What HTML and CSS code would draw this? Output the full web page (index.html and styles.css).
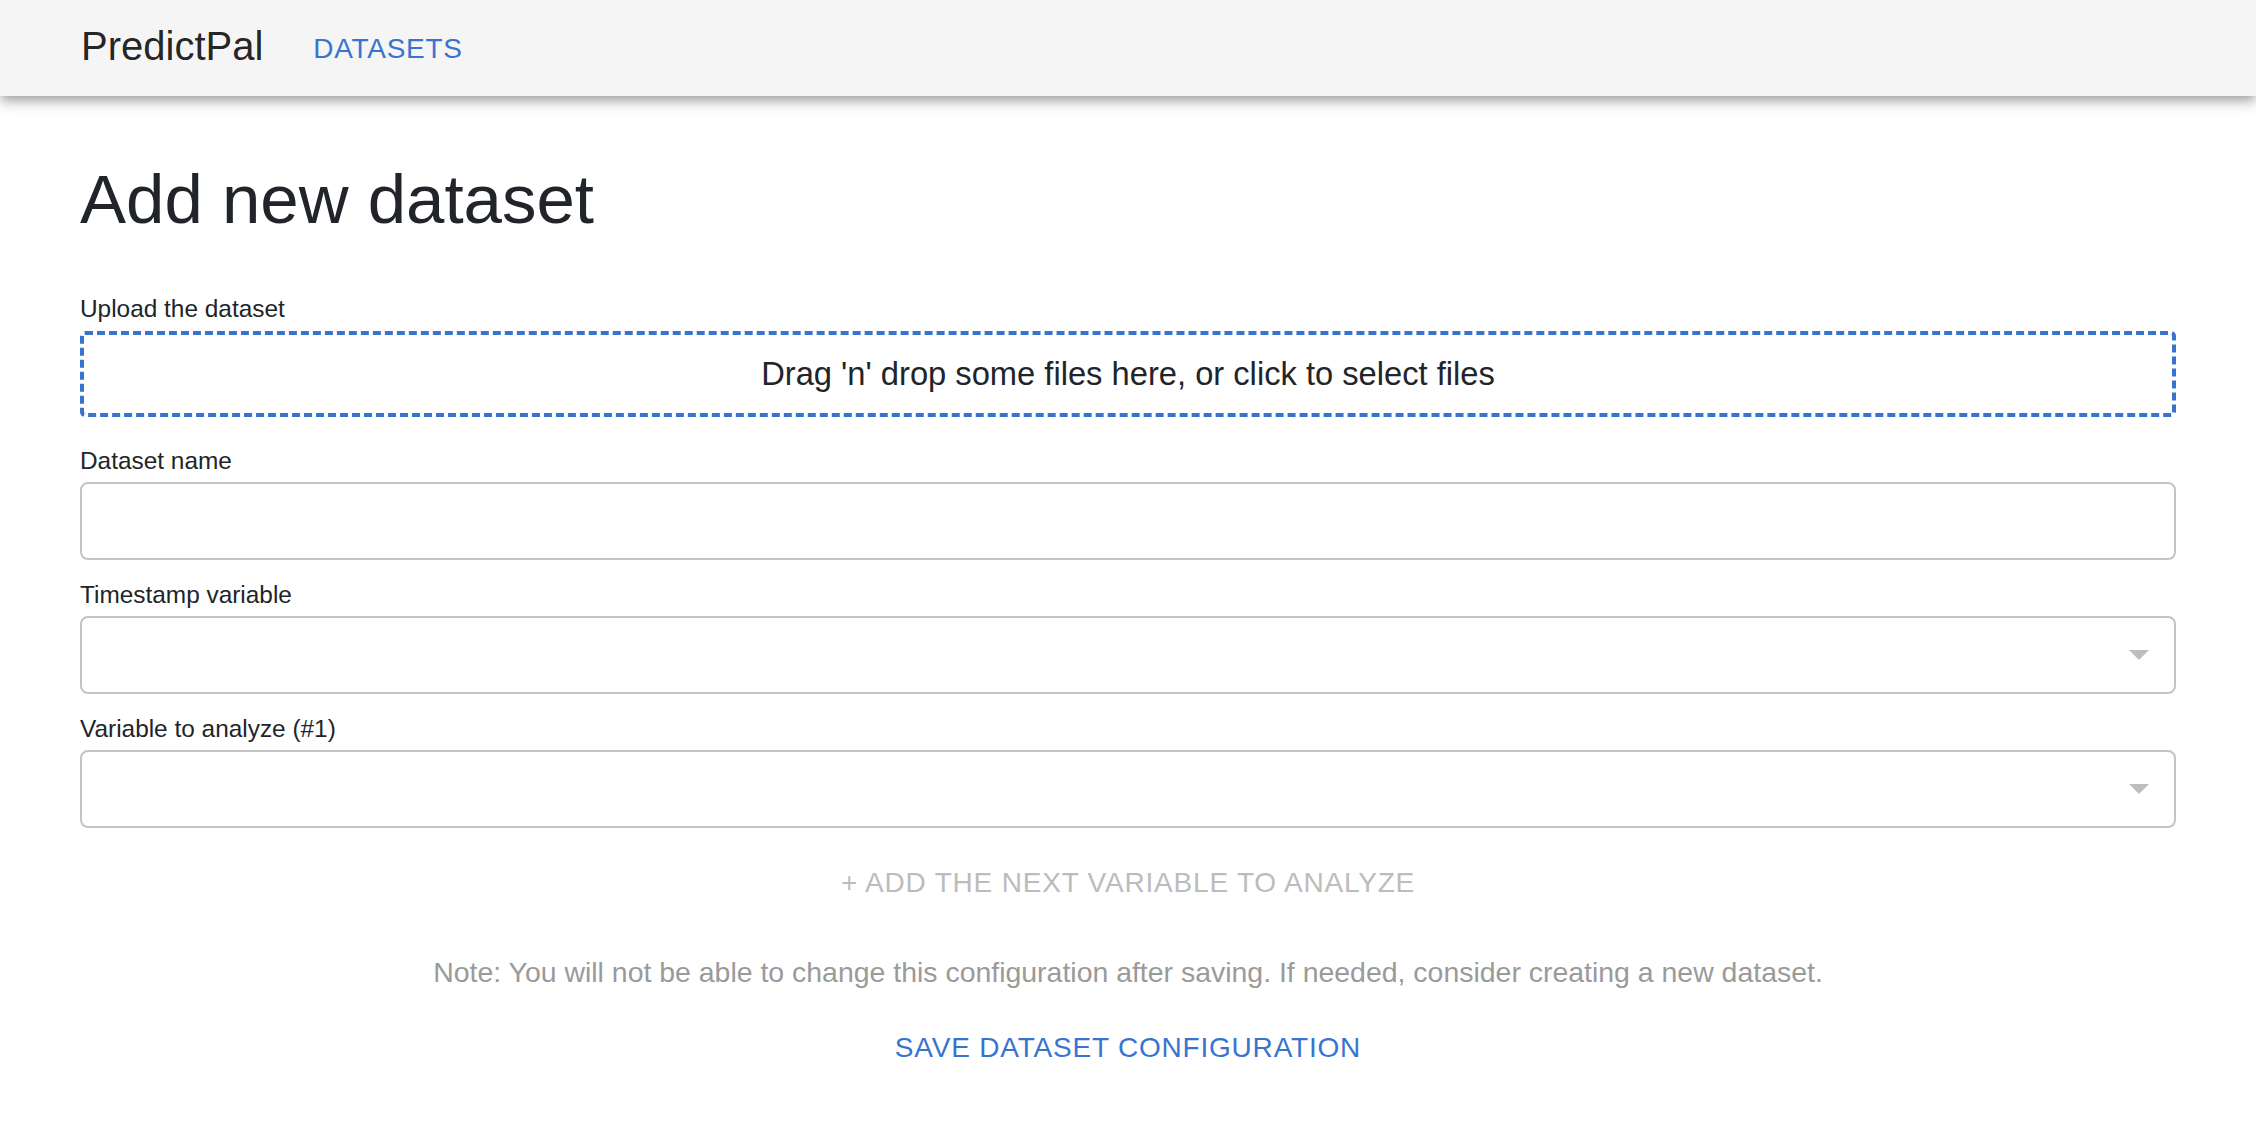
FILE: index.html
```html
<!DOCTYPE html>
<html lang="en">
<head>
<meta charset="utf-8">
<title>PredictPal - Add new dataset</title>
<link rel="stylesheet" href="styles.css">
</head>
<body>
<header class="appbar">
  <div class="toolbar">
    <span class="brand">PredictPal</span>
    <a class="nav-link" href="#">Datasets</a>
  </div>
</header>
<main class="page">
  <h1 class="title">Add new dataset</h1>
  <form class="form">
    <div class="field field-upload">
      <label class="label">Upload the dataset</label>
      <div class="dropzone">Drag 'n' drop some files here, or click to select files</div>
    </div>
    <div class="field">
      <label class="label">Dataset name</label>
      <div class="input"></div>
    </div>
    <div class="field">
      <label class="label">Timestamp variable</label>
      <div class="input select">
        <svg class="arrow" width="20" height="10" viewBox="0 0 20 10"><path d="M0 0 L20 0 L10 10 Z"/></svg>
      </div>
    </div>
    <div class="field">
      <label class="label">Variable to analyze (#1)</label>
      <div class="input select">
        <svg class="arrow" width="20" height="10" viewBox="0 0 20 10"><path d="M0 0 L20 0 L10 10 Z"/></svg>
      </div>
    </div>
  </form>
  <div class="actions">
    <div class="add-btn">+ Add the next variable to analyze</div>
    <p class="note">Note: You will not be able to change this configuration after saving. If needed, consider creating a new dataset.</p>
    <div class="save-btn">Save dataset configuration</div>
  </div>
</main>
</body>
</html>
```
FILE: styles.css
```css
* { box-sizing: border-box; }

body {
  margin: 0;
  font-family: "Liberation Sans", Arial, Helvetica, sans-serif;
  color: #212529;
  background: #ffffff;
}

.appbar {
  position: relative;
  z-index: 1;
  height: 96px;
  background: #f5f5f5;
  box-shadow: 0 4px 8px -2px rgba(0,0,0,0.2), 0 8px 10px 0 rgba(0,0,0,0.14), 0 2px 20px 0 rgba(0,0,0,0.12);
}

.toolbar {
  display: flex;
  align-items: center;
  height: 100%;
  padding-left: 81px;
}

.brand {
  font-size: 40px;
  line-height: 1.6;
  color: rgba(0,0,0,0.87);
  margin-bottom: 4px;
}

.nav-link {
  margin-left: 50px;
  font-size: 28px;
  line-height: 1.75;
  letter-spacing: 0.7px;
  color: #3874cf;
  text-decoration: none;
  text-transform: uppercase;
}

.page {
  padding: 0 80px;
}

.title {
  margin: 63px 0 0;
  font-size: 69px;
  font-weight: 400;
  line-height: 1.2;
  color: #212529;
}

.form {
  display: flex;
  flex-direction: column;
  gap: 17px;
  margin: 49px 0 0;
}

.field-upload {
  margin-bottom: 9px;
}

.label {
  display: block;
  font-size: 24.4px;
  line-height: 36px;
  margin-bottom: 3px;
}

.field-upload .label {
  margin-bottom: 4px;
}

.dropzone {
  border: 4px dashed #3874cf;
  border-radius: 5px;
  padding: 15px;
  text-align: center;
  font-size: 32.7px;
  line-height: 48px;
  color: #212529;
}

.input {
  height: 78px;
  border: 2px solid #c4c4c4;
  border-radius: 8px;
  background: #fff;
}

.select {
  display: flex;
  align-items: center;
  justify-content: flex-end;
  padding-right: 25px;
}

.arrow {
  fill: #bdbdbd;
  display: block;
}

.actions {
  text-align: center;
}

.add-btn {
  margin-top: 31px;
  font-size: 28px;
  line-height: 48px;
  letter-spacing: 0.8px;
  text-transform: uppercase;
  color: #bcbcbc;
}

.note {
  margin: 44px 0 0;
  font-size: 28.45px;
  line-height: 42px;
  color: #9a9a9a;
}

.save-btn {
  margin-top: 31px;
  font-size: 28px;
  line-height: 48px;
  letter-spacing: 0.8px;
  text-transform: uppercase;
  color: #3874cf;
}
```
